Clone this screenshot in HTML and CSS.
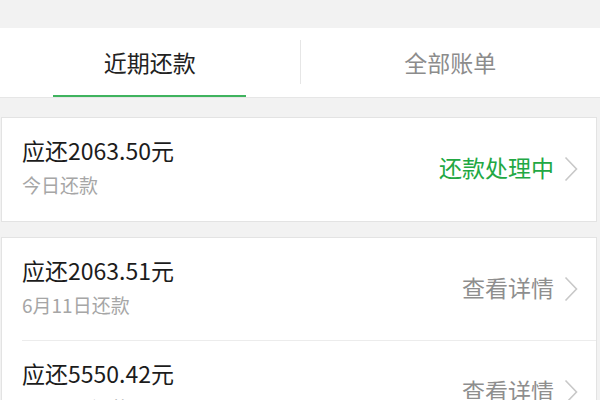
FILE: index.html
```html
<!DOCTYPE html>
<html lang="zh">
<head>
<meta charset="utf-8">
<link rel="stylesheet" href="styles.css">
</head>
<body>
<div class="page">
  <div class="tabs">
    <div class="tab active"><span>近期还款</span><i class="bar"></i></div>
    <div class="sep"></div>
    <div class="tab"><span>全部账单</span></div>
  </div>
  <div class="card">
    <div class="row">
      <div class="info">
        <div class="title">应还2063.50元</div>
        <div class="sub">今日还款</div>
      </div>
      <div class="action green">还款处理中
        <svg class="chev" width="14" height="26" viewBox="0 0 14 26"><path d="M1.5 1.5 L12.5 13 L1.5 24.5" fill="none" stroke="#c8c8c8" stroke-width="1.6"/></svg>
      </div>
    </div>
  </div>
  <div class="card second">
    <div class="row line">
      <div class="info">
        <div class="title">应还2063.51元</div>
        <div class="sub">6月11日还款</div>
      </div>
      <div class="action">查看详情
        <svg class="chev" width="14" height="26" viewBox="0 0 14 26"><path d="M1.5 1.5 L12.5 13 L1.5 24.5" fill="none" stroke="#c8c8c8" stroke-width="1.6"/></svg>
      </div>
    </div>
    <div class="row">
      <div class="info">
        <div class="title">应还5550.42元</div>
        <div class="sub">7月11日还款</div>
      </div>
      <div class="action">查看详情
        <svg class="chev" width="14" height="26" viewBox="0 0 14 26"><path d="M1.5 1.5 L12.5 13 L1.5 24.5" fill="none" stroke="#c8c8c8" stroke-width="1.6"/></svg>
      </div>
    </div>
  </div>
</div>
</body>
</html>
```
FILE: styles.css
```css
html, body {
  margin: 0;
  padding: 0;
  background: #f2f2f2;
  font-family: "Noto Sans CJK SC", "Noto Sans", sans-serif;
  overflow: hidden;
}
.page {
  width: 600px;
  height: 400px;
  padding-top: 28px;
  box-sizing: border-box;
}
.tabs {
  height: 69px;
  background: #fff;
  border-bottom: 1px solid #e6e6e6;
  display: flex;
  align-items: stretch;
}
.tab {
  flex: 1;
  position: relative;
  display: flex;
  align-items: center;
  justify-content: center;
  font-size: 23px;
  color: #8c8c8c;
  padding-bottom: 2px;
}
.tab.active {
  color: #222;
}
.tab .bar {
  position: absolute;
  left: 53px;
  right: 54px;
  bottom: 0;
  height: 2px;
  background: #3fb35e;
}
.sep {
  width: 1px;
  background: #e6e6e6;
  margin: 12px 0 13px;
}
.card {
  margin: 19px 3px 0 1px;
  background: #fff;
  border: 1px solid #e3e3e3;
}
.card.second {
  margin-top: 15px;
}
.row {
  display: flex;
  align-items: center;
  justify-content: space-between;
  margin-left: 20px;
  padding: 17px 18px 22px 0;
}
.row.line {
  border-bottom: 1px solid #ececec;
  padding-bottom: 21px;
}
.title {
  font-size: 23px;
  line-height: 30px;
  color: #1c1c1c;
}
.sub {
  font-size: 19px;
  line-height: 28px;
  margin-top: 6px;
  color: #a6a6a6;
}
.action {
  display: flex;
  align-items: center;
  font-size: 23px;
  color: #8e8e8e;
  margin-top: 0;
}
.action.green {
  color: #22a843;
}
.chev {
  margin-left: 10px;
  margin-top: 4px;
}
```
